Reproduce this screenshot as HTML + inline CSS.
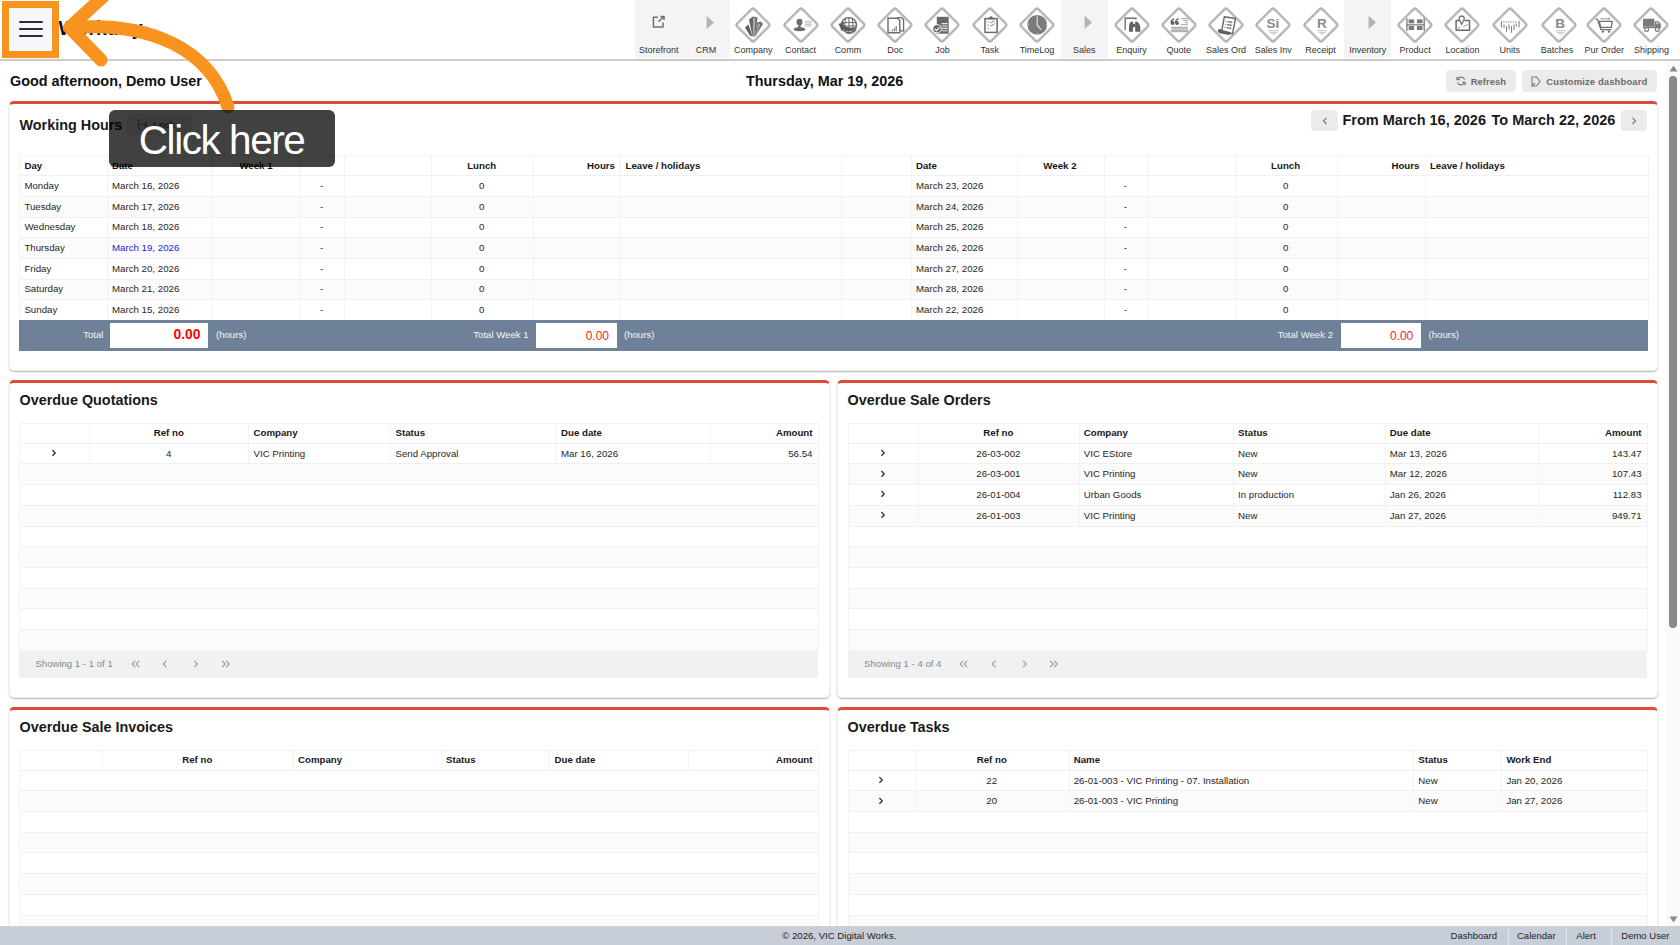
<!DOCTYPE html><html><head><meta charset="utf-8"><style>*{box-sizing:border-box;margin:0;padding:0}
html,body{width:1680px;height:945px;overflow:hidden;background:#fff;font-family:"Liberation Sans",sans-serif;color:#222}
.abs{position:absolute}
#topbar{position:absolute;left:0;top:0;width:1680px;height:61px;background:#fff;border-bottom:2px solid #cbcbcb}
.ti{position:absolute;top:0;width:47.24px;height:58px}
.ti.g{background:#f4f4f4}
.ti .lb{position:absolute;left:-8px;right:-8px;top:44px;font-size:9px;line-height:12px;color:#333;white-space:nowrap;text-align:center}
.ti svg{position:absolute;left:3.62px;top:5px}
#scroll{position:absolute;left:1666px;top:62px;width:14px;height:864px;background:#fafafa}
.greet{font-weight:bold;font-size:14.4px;line-height:18px;color:#111;white-space:nowrap}
.card{position:absolute;background:#fff;border:1px solid #f0f0f0;border-top:3px solid #dd4a35;border-radius:5px;box-shadow:0 1px 1.5px rgba(0,0,0,.3)}
.ctitle{position:absolute;font-weight:bold;font-size:14.4px;line-height:18px;color:#1a1a1a;white-space:nowrap}
.btn{position:absolute;background:#ebebeb;border-radius:4px;color:#6c6c6c;font-weight:bold;font-size:9.45px;line-height:22px;white-space:nowrap}
.btn.nav{text-align:center;font-weight:normal;font-size:13px;line-height:20px;color:#777}
.rng{font-weight:bold;font-size:14.5px;line-height:18px;color:#1a1a1a;white-space:nowrap}
table{border-collapse:collapse;table-layout:fixed;font-size:9.7px;color:#262626;position:absolute}
td,th{height:20.7px;padding:0 5.5px 0 4px;white-space:nowrap;overflow:hidden;border-left:1px solid #f3f3f3;border-right:1px solid #f3f3f3;border-bottom:1px solid #f0f0f0;text-align:left;line-height:12px}
th{font-weight:bold;color:#181818;height:19.8px;border-top:1px solid #f3f3f3}
tr.o td{background:#fbfbfb}
.c{text-align:center}.r{text-align:right}
.chev{font-weight:bold;font-size:11px;color:#333}
.totbar{background:#6f8199;color:#fff;font-size:9.6px}
.totbar .tl{top:0;line-height:30.7px;color:#f4f6fa}
.totbar .hrs{top:0;line-height:30.7px;color:#f4f6fa}
.totbar .inp{top:3.1px;height:24.8px;padding-top:0.7px;background:#fff;text-align:right;padding-right:7.7px;color:#f00}
.totbar .big{font-weight:bold;font-size:13.9px;line-height:24px;position:relative;top:-1.6px}
.totbar .sm{font-size:12px;line-height:24px;color:#f22}
.pag{position:absolute;background:#f0f1f3;height:28.5px;font-size:9.6px;color:#888;line-height:28.5px}
.pag .pg{color:#777;font-size:11px}
#footer{position:absolute;left:0;top:926px;width:1680px;height:19px;background:#c8ced8;font-size:9.5px;color:#222;line-height:19px}
.fsep{top:0;height:19px;width:1.2px;background:#dfe3ea}
</style></head><body>
<div id="topbar">
<div class="abs" style="left:58.5px;top:17.3px;font-weight:bold;font-size:19.5px;line-height:22px;color:#111">Worktray</div>
<div class="ti g" style="left:635.20px"><svg style="left:3.63px" width="40" height="40" viewBox="0 0 40 40"><path d="M18.8 12.3H14.4V22H24V17.6" fill="none" stroke="#6d6d6d" stroke-width="1.5" stroke-linejoin="round"/><path d="M19.5 16.8L24.6 11.8M21.4 11.4H25V15" fill="none" stroke="#6d6d6d" stroke-width="1.5"/></svg><div class="lb">Storefront</div></div>
<div class="ti g" style="left:682.47px"><svg style="left:3.63px" width="40" height="40" viewBox="0 0 40 40"><polygon points="20.6,10.8 28,17.4 20.6,24" fill="#b3b3b3"/></svg><div class="lb">CRM</div></div>
<div class="ti" style="left:729.74px"><svg style="left:3.63px" width="40" height="40" viewBox="0 0 40 40"><path d="M18.4 4.4Q20 2.8 21.6 4.4L35.6 18.4Q37.2 20 35.6 21.6L21.6 35.6Q20 37.2 18.4 35.6L4.4 21.6Q2.8 20 4.4 18.4Z" fill="#fff" stroke="#b6b6b6" stroke-width="2.5"/><path d="M18.9 5.7Q20 4.6 21.1 5.7L34.3 18.9Q35.4 20 34.3 21.1L21.1 34.3Q20 35.4 18.9 34.3L5.7 21.1Q4.6 20 5.7 18.9Z" fill="none" stroke="#e2e2e2" stroke-width="0.7"/><path d="M12 22.5L15.5 19.5L19.5 31.5L17 30.5Z" fill="#5f5f5f"/><path d="M16 14.5L20 11.5L24.5 12.5L22 31.5L19.5 31.5Z" fill="#666"/><path d="M20 12.5L22.5 13L21.5 31L19.8 31.2Z" fill="#aaa"/><path d="M24 17.5L28 16.5L30 19L22.5 31L22 30.5Z" fill="#707070"/><path d="M25.5 18.5L27.3 19.3L22.6 30.3Z" fill="#b5b5b5"/></svg><div class="lb">Company</div></div>
<div class="ti" style="left:777.01px"><svg style="left:3.93px" width="40" height="40" viewBox="0 0 40 40"><path d="M18.4 4.4Q20 2.8 21.6 4.4L35.6 18.4Q37.2 20 35.6 21.6L21.6 35.6Q20 37.2 18.4 35.6L4.4 21.6Q2.8 20 4.4 18.4Z" fill="#fff" stroke="#b6b6b6" stroke-width="2.5"/><path d="M18.9 5.7Q20 4.6 21.1 5.7L34.3 18.9Q35.4 20 34.3 21.1L21.1 34.3Q20 35.4 18.9 34.3L5.7 21.1Q4.6 20 5.7 18.9Z" fill="none" stroke="#e2e2e2" stroke-width="0.7"/><ellipse cx="18.5" cy="17.1" rx="3" ry="3.4" fill="#6a6a6a"/><path d="M17.3 20.2H19.7V22.3Q24.3 22.6 24.3 24.6Q24.3 26.3 18.5 26.3Q12.7 26.3 12.7 24.6Q12.7 22.6 17.3 22.3Z" fill="#6a6a6a"/><path d="M24 16.3H30.7M24 18H30.7M24 19.6H30.7M24 21H30.7" stroke="#b8b8b8" stroke-width="0.9"/></svg><div class="lb">Contact</div></div>
<div class="ti" style="left:824.28px"><svg style="left:3.63px" width="40" height="40" viewBox="0 0 40 40"><path d="M18.4 4.4Q20 2.8 21.6 4.4L35.6 18.4Q37.2 20 35.6 21.6L21.6 35.6Q20 37.2 18.4 35.6L4.4 21.6Q2.8 20 4.4 18.4Z" fill="#fff" stroke="#b6b6b6" stroke-width="2.5"/><path d="M18.9 5.7Q20 4.6 21.1 5.7L34.3 18.9Q35.4 20 34.3 21.1L21.1 34.3Q20 35.4 18.9 34.3L5.7 21.1Q4.6 20 5.7 18.9Z" fill="none" stroke="#e2e2e2" stroke-width="0.7"/><circle cx="20.9" cy="20.2" r="7.6" fill="#fff" stroke="#686868" stroke-width="1.4"/><path d="M13.5 17.6H28.3M13.5 21H28.3M17.6 13.2Q15.9 20 17.6 27M20.9 12.6V27.8M24.2 13.2Q25.9 20 24.2 27" fill="none" stroke="#6e6e6e" stroke-width="1"/><path d="M10.6 18.8L16.8 17.6L15.4 19.8Q20.5 24.3 28.6 21.8Q26.2 26.8 18.6 26.2L15.2 24.3L13.8 26.6Z" fill="#5c5c5c"/><path d="M18.5 28.2Q24.5 29.4 28.2 24.6" fill="none" stroke="#707070" stroke-width="1.1"/></svg><div class="lb">Comm</div></div>
<div class="ti" style="left:871.55px"><svg style="left:3.63px" width="40" height="40" viewBox="0 0 40 40"><path d="M18.4 4.4Q20 2.8 21.6 4.4L35.6 18.4Q37.2 20 35.6 21.6L21.6 35.6Q20 37.2 18.4 35.6L4.4 21.6Q2.8 20 4.4 18.4Z" fill="#fff" stroke="#b6b6b6" stroke-width="2.5"/><path d="M18.9 5.7Q20 4.6 21.1 5.7L34.3 18.9Q35.4 20 34.3 21.1L21.1 34.3Q20 35.4 18.9 34.3L5.7 21.1Q4.6 20 5.7 18.9Z" fill="none" stroke="#e2e2e2" stroke-width="0.7"/><path d="M22.3 12.6H26.5L28.6 14.7V25.8H22.3" fill="#fff" stroke="#6a6a6a" stroke-width="1.3"/><path d="M13 13.2H22.5L24.8 15.5V27.8H13Z" fill="#fff" stroke="#6a6a6a" stroke-width="1.4"/><path d="M15.8 26.3V25.6M17.6 26.3V24.6M19.4 26.3V23.2M21.2 26.3V21" stroke="#6a6a6a" stroke-width="1"/></svg><div class="lb">Doc</div></div>
<div class="ti" style="left:918.82px"><svg style="left:3.63px" width="40" height="40" viewBox="0 0 40 40"><path d="M18.4 4.4Q20 2.8 21.6 4.4L35.6 18.4Q37.2 20 35.6 21.6L21.6 35.6Q20 37.2 18.4 35.6L4.4 21.6Q2.8 20 4.4 18.4Z" fill="#fff" stroke="#b6b6b6" stroke-width="2.5"/><path d="M18.9 5.7Q20 4.6 21.1 5.7L34.3 18.9Q35.4 20 34.3 21.1L21.1 34.3Q20 35.4 18.9 34.3L5.7 21.1Q4.6 20 5.7 18.9Z" fill="none" stroke="#e2e2e2" stroke-width="0.7"/><rect x="14.8" y="11.8" width="11.9" height="16.9" fill="#676767"/><path d="M19.5 18.6H25.6M19.5 21H25.6M19.5 23.4H25.6M19.5 25.8H25.6" stroke="#e6e6e6" stroke-width="1.1"/><circle cx="15" cy="23.8" r="4.1" fill="#676767" stroke="#fff" stroke-width="0.9"/><path d="M12.9 23.9L14.6 25.6L17.3 22.4" fill="none" stroke="#fff" stroke-width="1.2"/></svg><div class="lb">Job</div></div>
<div class="ti" style="left:966.09px"><svg style="left:3.63px" width="40" height="40" viewBox="0 0 40 40"><path d="M18.4 4.4Q20 2.8 21.6 4.4L35.6 18.4Q37.2 20 35.6 21.6L21.6 35.6Q20 37.2 18.4 35.6L4.4 21.6Q2.8 20 4.4 18.4Z" fill="#fff" stroke="#b6b6b6" stroke-width="2.5"/><path d="M18.9 5.7Q20 4.6 21.1 5.7L34.3 18.9Q35.4 20 34.3 21.1L21.1 34.3Q20 35.4 18.9 34.3L5.7 21.1Q4.6 20 5.7 18.9Z" fill="none" stroke="#e2e2e2" stroke-width="0.7"/><rect x="15" y="13.6" width="12.1" height="13.8" fill="none" stroke="#6a6a6a" stroke-width="1.5"/><path d="M18.4 14.2V12.5H19.8A1.3 1.3 0 0 1 22.4 12.5H23.8V14.2Z" fill="#6a6a6a"/><path d="M17.5 17H18.6M17.5 20.2H18.6M17.5 23.4H18.6" stroke="#777" stroke-width="1.2"/><path d="M20.2 16.8L21.3 17.8L24.6 15.3M20.2 20L21.3 21L24.6 18.5" fill="none" stroke="#777" stroke-width="1"/></svg><div class="lb">Task</div></div>
<div class="ti" style="left:1013.36px"><svg style="left:3.63px" width="40" height="40" viewBox="0 0 40 40"><path d="M18.4 4.4Q20 2.8 21.6 4.4L35.6 18.4Q37.2 20 35.6 21.6L21.6 35.6Q20 37.2 18.4 35.6L4.4 21.6Q2.8 20 4.4 18.4Z" fill="#fff" stroke="#b6b6b6" stroke-width="2.5"/><path d="M18.9 5.7Q20 4.6 21.1 5.7L34.3 18.9Q35.4 20 34.3 21.1L21.1 34.3Q20 35.4 18.9 34.3L5.7 21.1Q4.6 20 5.7 18.9Z" fill="none" stroke="#e2e2e2" stroke-width="0.7"/><circle cx="20.2" cy="19.8" r="9.9" fill="#7b7b7b"/><path d="M20.2 11.4V20.2L24.3 24.9" fill="none" stroke="#e8e8e8" stroke-width="1.1"/><path d="M20.2 10.7V11.7M20.2 27.9V28.9M11 19.8H12M28.4 19.8H29.4" stroke="#ddd" stroke-width="0.9"/></svg><div class="lb">TimeLog</div></div>
<div class="ti g" style="left:1060.63px"><svg style="left:3.63px" width="40" height="40" viewBox="0 0 40 40"><polygon points="20.6,10.8 28,17.4 20.6,24" fill="#b3b3b3"/></svg><div class="lb">Sales</div></div>
<div class="ti" style="left:1107.90px"><svg style="left:3.63px" width="40" height="40" viewBox="0 0 40 40"><path d="M18.4 4.4Q20 2.8 21.6 4.4L35.6 18.4Q37.2 20 35.6 21.6L21.6 35.6Q20 37.2 18.4 35.6L4.4 21.6Q2.8 20 4.4 18.4Z" fill="#fff" stroke="#b6b6b6" stroke-width="2.5"/><path d="M18.9 5.7Q20 4.6 21.1 5.7L34.3 18.9Q35.4 20 34.3 21.1L21.1 34.3Q20 35.4 18.9 34.3L5.7 21.1Q4.6 20 5.7 18.9Z" fill="none" stroke="#e2e2e2" stroke-width="0.7"/><path d="M13.2 25V13.2H24V14.6" fill="none" stroke="#707070" stroke-width="1.4"/><path d="M17.6 18L19.6 16.4H21V26.7H17V21.5Z" fill="#636363"/><path d="M23.2 16.4H24.6L26.8 18L28.3 21.5V26.7H23.2Z" fill="#636363"/><rect x="20.8" y="18.8" width="2.6" height="3.4" fill="#636363"/></svg><div class="lb">Enquiry</div></div>
<div class="ti" style="left:1155.17px"><svg style="left:3.63px" width="40" height="40" viewBox="0 0 40 40"><path d="M18.4 4.4Q20 2.8 21.6 4.4L35.6 18.4Q37.2 20 35.6 21.6L21.6 35.6Q20 37.2 18.4 35.6L4.4 21.6Q2.8 20 4.4 18.4Z" fill="#fff" stroke="#b6b6b6" stroke-width="2.5"/><path d="M18.9 5.7Q20 4.6 21.1 5.7L34.3 18.9Q35.4 20 34.3 21.1L21.1 34.3Q20 35.4 18.9 34.3L5.7 21.1Q4.6 20 5.7 18.9Z" fill="none" stroke="#e2e2e2" stroke-width="0.7"/><circle cx="13.6" cy="18" r="1.9" fill="#5f5f5f"/><circle cx="18" cy="18" r="1.9" fill="#5f5f5f"/><path d="M12 17.8Q12.3 14.4 15.2 13.9M16.4 17.8Q16.7 14.4 19.6 13.9" fill="none" stroke="#5f5f5f" stroke-width="1.4"/><path d="M21.7 13.7H29M24.2 15.8H29M26 17.8H29M21.7 19.8H29M12.2 22.4H29M12.2 23.9H29M12.2 25.3H29M12.2 26.7H29" stroke="#8c8c8c" stroke-width="0.85"/></svg><div class="lb">Quote</div></div>
<div class="ti" style="left:1202.44px"><svg style="left:3.63px" width="40" height="40" viewBox="0 0 40 40"><path d="M18.4 4.4Q20 2.8 21.6 4.4L35.6 18.4Q37.2 20 35.6 21.6L21.6 35.6Q20 37.2 18.4 35.6L4.4 21.6Q2.8 20 4.4 18.4Z" fill="#fff" stroke="#b6b6b6" stroke-width="2.5"/><path d="M18.9 5.7Q20 4.6 21.1 5.7L34.3 18.9Q35.4 20 34.3 21.1L21.1 34.3Q20 35.4 18.9 34.3L5.7 21.1Q4.6 20 5.7 18.9Z" fill="none" stroke="#e2e2e2" stroke-width="0.7"/><path d="M18.3 11.8L29.5 13.5L26.5 28.8L15.5 27Z" fill="#fff" stroke="#666" stroke-width="1.4" stroke-linejoin="round"/><path d="M19.5 16.3L20.3 16.4M21.5 16.6L26.3 17.4M19 19.3L19.8 19.4M21 19.6L25.8 20.4M18.5 22.3L19.3 22.4M20.5 22.6L25.3 23.4" stroke="#6a6a6a" stroke-width="1.1"/><path d="M11.8 25.2Q13.5 22.8 16 25L25 27.3Q24.5 30.8 21.5 29.8L14 28.2Q11.5 27.5 11.8 25.2Z" fill="#5f5f5f"/></svg><div class="lb">Sales Ord</div></div>
<div class="ti" style="left:1249.71px"><svg style="left:3.63px" width="40" height="40" viewBox="0 0 40 40"><path d="M18.4 4.4Q20 2.8 21.6 4.4L35.6 18.4Q37.2 20 35.6 21.6L21.6 35.6Q20 37.2 18.4 35.6L4.4 21.6Q2.8 20 4.4 18.4Z" fill="#fff" stroke="#b6b6b6" stroke-width="2.5"/><path d="M18.9 5.7Q20 4.6 21.1 5.7L34.3 18.9Q35.4 20 34.3 21.1L21.1 34.3Q20 35.4 18.9 34.3L5.7 21.1Q4.6 20 5.7 18.9Z" fill="none" stroke="#e2e2e2" stroke-width="0.7"/><text x="19.8" y="23.3" text-anchor="middle" font-family="Liberation Sans" font-weight="bold" font-size="13.6" fill="#8a8a8a">Si</text><path d="M15.2 25.7H25.8M16.6 27.4H24.4M18.3 29H22.7" stroke="#c4c4c4" stroke-width="1"/></svg><div class="lb">Sales Inv</div></div>
<div class="ti" style="left:1296.98px"><svg style="left:3.93px" width="40" height="40" viewBox="0 0 40 40"><path d="M18.4 4.4Q20 2.8 21.6 4.4L35.6 18.4Q37.2 20 35.6 21.6L21.6 35.6Q20 37.2 18.4 35.6L4.4 21.6Q2.8 20 4.4 18.4Z" fill="#fff" stroke="#b6b6b6" stroke-width="2.5"/><path d="M18.9 5.7Q20 4.6 21.1 5.7L34.3 18.9Q35.4 20 34.3 21.1L21.1 34.3Q20 35.4 18.9 34.3L5.7 21.1Q4.6 20 5.7 18.9Z" fill="none" stroke="#e2e2e2" stroke-width="0.7"/><text x="21" y="23.3" text-anchor="middle" font-family="Liberation Sans" font-weight="bold" font-size="13.6" fill="#8a8a8a">R</text><path d="M16.2 25.7H25.8M17.6 27.4H24.4M19.3 29H22.7" stroke="#c4c4c4" stroke-width="1"/></svg><div class="lb">Receipt</div></div>
<div class="ti g" style="left:1344.25px"><svg style="left:3.63px" width="40" height="40" viewBox="0 0 40 40"><polygon points="20.6,10.8 28,17.4 20.6,24" fill="#b3b3b3"/></svg><div class="lb">Inventory</div></div>
<div class="ti" style="left:1391.52px"><svg style="left:3.63px" width="40" height="40" viewBox="0 0 40 40"><path d="M18.4 4.4Q20 2.8 21.6 4.4L35.6 18.4Q37.2 20 35.6 21.6L21.6 35.6Q20 37.2 18.4 35.6L4.4 21.6Q2.8 20 4.4 18.4Z" fill="#fff" stroke="#b6b6b6" stroke-width="2.5"/><path d="M18.9 5.7Q20 4.6 21.1 5.7L34.3 18.9Q35.4 20 34.3 21.1L21.1 34.3Q20 35.4 18.9 34.3L5.7 21.1Q4.6 20 5.7 18.9Z" fill="none" stroke="#e2e2e2" stroke-width="0.7"/><path d="M11.9 13.3V26.1M29.2 13.3V26.1M12 19.8H29.1" stroke="#777" stroke-width="1.3"/><rect x="13.6" y="14.4" width="5.5" height="3.9" fill="#787878"/><rect x="21.9" y="14.4" width="5.6" height="3.9" fill="#787878"/><rect x="13.6" y="21.1" width="5.5" height="3.9" fill="#787878"/><rect x="21.9" y="21.1" width="5.6" height="3.9" fill="#787878"/></svg><div class="lb">Product</div></div>
<div class="ti" style="left:1438.79px"><svg style="left:3.63px" width="40" height="40" viewBox="0 0 40 40"><path d="M18.4 4.4Q20 2.8 21.6 4.4L35.6 18.4Q37.2 20 35.6 21.6L21.6 35.6Q20 37.2 18.4 35.6L4.4 21.6Q2.8 20 4.4 18.4Z" fill="#fff" stroke="#b6b6b6" stroke-width="2.5"/><path d="M18.9 5.7Q20 4.6 21.1 5.7L34.3 18.9Q35.4 20 34.3 21.1L21.1 34.3Q20 35.4 18.9 34.3L5.7 21.1Q4.6 20 5.7 18.9Z" fill="none" stroke="#e2e2e2" stroke-width="0.7"/><path d="M17 15.4H14.1V25.2H27.5V15.4H22.5" fill="none" stroke="#6a6a6a" stroke-width="1.5" stroke-linejoin="round"/><path d="M19.7 19.2L17.4 14.8A2.6 2.6 0 1 1 22 14.8Z" fill="none" stroke="#6a6a6a" stroke-width="1.3"/><path d="M15.5 24L18.5 21.6M21.3 21.6L25.8 19.5" stroke="#888" stroke-width="0.9"/></svg><div class="lb">Location</div></div>
<div class="ti" style="left:1486.06px"><svg style="left:3.63px" width="40" height="40" viewBox="0 0 40 40"><path d="M18.4 4.4Q20 2.8 21.6 4.4L35.6 18.4Q37.2 20 35.6 21.6L21.6 35.6Q20 37.2 18.4 35.6L4.4 21.6Q2.8 20 4.4 18.4Z" fill="#fff" stroke="#b6b6b6" stroke-width="2.5"/><path d="M18.9 5.7Q20 4.6 21.1 5.7L34.3 18.9Q35.4 20 34.3 21.1L21.1 34.3Q20 35.4 18.9 34.3L5.7 21.1Q4.6 20 5.7 18.9Z" fill="none" stroke="#e2e2e2" stroke-width="0.7"/><path d="M11.4 16V22.5M29.1 16V22.5M13.8 16.3V17.6M16.2 16.3V17.6M18.6 16.3V17.6M21 16.3V17.6M23.4 16.3V17.6M25.8 16.3V17.6M14 19.5V23M16.5 21V27M19 19.5V24.5M21.5 21V27.7M24 19.5V25M26.3 18.5V21.5" stroke="#848484" stroke-width="1.1"/></svg><div class="lb">Units</div></div>
<div class="ti" style="left:1533.33px"><svg style="left:6.13px" width="40" height="40" viewBox="0 0 40 40"><path d="M18.4 4.4Q20 2.8 21.6 4.4L35.6 18.4Q37.2 20 35.6 21.6L21.6 35.6Q20 37.2 18.4 35.6L4.4 21.6Q2.8 20 4.4 18.4Z" fill="#fff" stroke="#b6b6b6" stroke-width="2.5"/><path d="M18.9 5.7Q20 4.6 21.1 5.7L34.3 18.9Q35.4 20 34.3 21.1L21.1 34.3Q20 35.4 18.9 34.3L5.7 21.1Q4.6 20 5.7 18.9Z" fill="none" stroke="#e2e2e2" stroke-width="0.7"/><text x="21.2" y="23.3" text-anchor="middle" font-family="Liberation Sans" font-weight="bold" font-size="13.6" fill="#8a8a8a">B</text><path d="M16.4 25.7H27M17.8 27.4H25.6M19.5 29H23.9" stroke="#c4c4c4" stroke-width="1"/></svg><div class="lb">Batches</div></div>
<div class="ti" style="left:1580.60px"><svg style="left:3.63px" width="40" height="40" viewBox="0 0 40 40"><path d="M18.4 4.4Q20 2.8 21.6 4.4L35.6 18.4Q37.2 20 35.6 21.6L21.6 35.6Q20 37.2 18.4 35.6L4.4 21.6Q2.8 20 4.4 18.4Z" fill="#fff" stroke="#b6b6b6" stroke-width="2.5"/><path d="M18.9 5.7Q20 4.6 21.1 5.7L34.3 18.9Q35.4 20 34.3 21.1L21.1 34.3Q20 35.4 18.9 34.3L5.7 21.1Q4.6 20 5.7 18.9Z" fill="none" stroke="#e2e2e2" stroke-width="0.7"/><path d="M11.6 14.2H13.4L16.9 24.6H27.5" fill="none" stroke="#6d6d6d" stroke-width="1.3" stroke-linejoin="round"/><path d="M15.2 16.4H28.2L27.3 22.4H17Z" fill="none" stroke="#6d6d6d" stroke-width="1.3"/><circle cx="18.9" cy="26.6" r="1.2" fill="#6d6d6d"/><circle cx="25" cy="26.6" r="1.2" fill="#6d6d6d"/><path d="M16.3 13.8H26M24.6 12.5L26 13.8L24.6 15.1" fill="none" stroke="#888" stroke-width="0.9"/></svg><div class="lb">Pur Order</div></div>
<div class="ti" style="left:1627.87px"><svg style="left:3.63px" width="40" height="40" viewBox="0 0 40 40"><path d="M18.4 4.4Q20 2.8 21.6 4.4L35.6 18.4Q37.2 20 35.6 21.6L21.6 35.6Q20 37.2 18.4 35.6L4.4 21.6Q2.8 20 4.4 18.4Z" fill="#fff" stroke="#b6b6b6" stroke-width="2.5"/><path d="M18.9 5.7Q20 4.6 21.1 5.7L34.3 18.9Q35.4 20 34.3 21.1L21.1 34.3Q20 35.4 18.9 34.3L5.7 21.1Q4.6 20 5.7 18.9Z" fill="none" stroke="#e2e2e2" stroke-width="0.7"/><rect x="12" y="13.7" width="11.4" height="7.9" fill="#7c7c7c"/><path d="M23.8 16.2H27.6L29.8 19V23.2H23.8Z" fill="#7c7c7c"/><rect x="12" y="21.6" width="17.8" height="1.6" fill="#7c7c7c"/><circle cx="15.6" cy="24.5" r="1.9" fill="#fff" stroke="#7c7c7c" stroke-width="1.2"/><circle cx="26.3" cy="24.5" r="1.9" fill="#fff" stroke="#7c7c7c" stroke-width="1.2"/><rect x="25.2" y="17.2" width="2.4" height="2" fill="#fff" opacity=".6"/></svg><div class="lb">Shipping</div></div>
</div>
<div id="scroll"><div class="abs" style="left:3.4px;top:14px;width:8px;height:552px;background:#898989;border-radius:4px"></div>
<svg class="abs" style="left:2.9px;top:2.6px" width="9" height="7"><polygon points="4.5,0.5 8.5,6.5 0.5,6.5" fill="#8a8a8a"/></svg>
<svg class="abs" style="left:2.9px;top:853.5px" width="9" height="7"><polygon points="0.5,0.5 8.5,0.5 4.5,6.5" fill="#8a8a8a"/></svg>
</div>
<div class="abs greet" style="left:10px;top:72px">Good afternoon, Demo User</div>
<div class="abs greet" style="left:746px;top:72px">Thursday, Mar 19, 2026</div>
<div class="btn" style="left:1445.5px;top:70px;width:70.5px;height:22px;padding-left:10px"><svg class="abs" style="left:10px;top:6px" width="10" height="10" viewBox="0 0 10 10"><path d="M8.6 3.6A3.9 3.9 0 0 0 1.6 3M1.4 6.4A3.9 3.9 0 0 0 8.4 7" fill="none" stroke="#7a7a7a" stroke-width="1.2"/><path d="M1 0.8V3.6H3.8M9 9.2V6.4H6.2" fill="none" stroke="#7a7a7a" stroke-width="1.2"/></svg><span class="abs" style="left:25.3px;top:0.6px">Refresh</span></div>
<div class="btn" style="left:1521.8px;top:70px;width:135px;height:22px"><svg class="abs" style="left:9.5px;top:5.5px" width="10" height="11" viewBox="0 0 10 11"><path d="M1 1H5.5L9 5.5L5.5 10H1Z" fill="none" stroke="#7a7a7a" stroke-width="1.1"/><path d="M1 10L4 7" stroke="#7a7a7a" stroke-width="1.1"/></svg><span class="abs" style="left:24.5px;top:0.6px;letter-spacing:0.13px">Customize dashboard</span></div>
<div class="card" style="left:9px;top:101px;width:1649px;height:269.5px"></div>
<div class="ctitle" style="left:19.5px;top:116.3px">Working Hours</div>
<div class="btn" style="left:127px;top:114px;width:64.5px;height:21px;line-height:21px"><svg class="abs" style="left:10px;top:5px" width="12" height="11" viewBox="0 0 12 11"><path d="M4 1H1.5V10H4" fill="none" stroke="#7a7a7a" stroke-width="1.1"/><path d="M3.5 5.5H10M7.5 3L10 5.5L7.5 8" fill="none" stroke="#7a7a7a" stroke-width="1.1"/></svg><span class="abs" style="left:26px;top:0">Lock</span></div>
<div class="btn nav" style="left:1311px;top:110px;width:27px;height:21px"><svg class="abs" style="left:10.5px;top:6.6px" width="6" height="8" viewBox="0 0 6 8"><path d="M4.5 0.8L1.5 3.9L4.5 7" fill="none" stroke="#7a7a7a" stroke-width="1.2"/></svg></div>
<div class="abs rng" style="left:1342.5px;top:111px">From March 16, 2026</div><div class="abs rng" style="left:1491.5px;top:111px">To March 22, 2026</div>
<div class="btn nav" style="left:1621px;top:110px;width:26px;height:21px"><svg class="abs" style="left:10.3px;top:6.6px" width="6" height="8" viewBox="0 0 6 8"><path d="M1.5 0.8L4.5 3.9L1.5 7" fill="none" stroke="#7a7a7a" stroke-width="1.2"/></svg></div>
<table class="tbl wh" style="left:19.4px;top:155.4px;width:1628.20px"><colgroup><col style="width:87.60px"><col style="width:105.50px"><col style="width:87.50px"><col style="width:43.75px"><col style="width:87.25px"><col style="width:102.00px"><col style="width:87.50px"><col style="width:220.50px"><col style="width:70.00px"><col style="width:105.70px"><col style="width:87.10px"><col style="width:43.80px"><col style="width:87.20px"><col style="width:102.20px"><col style="width:88.00px"><col style="width:222.60px"></colgroup><tr class="hd"><th>Day</th><th>Date</th><th class="c">Week 1</th><th></th><th></th><th class="c">Lunch</th><th class="r">Hours</th><th>Leave / holidays</th><th></th><th>Date</th><th class="c">Week 2</th><th></th><th></th><th class="c">Lunch</th><th class="r">Hours</th><th>Leave / holidays</th></tr><tr><td>Monday</td><td>March 16, 2026</td><td></td><td class="c">-</td><td></td><td class="c">0</td><td></td><td></td><td></td><td>March 23, 2026</td><td></td><td class="c">-</td><td></td><td class="c">0</td><td></td><td></td></tr><tr class="o"><td>Tuesday</td><td>March 17, 2026</td><td></td><td class="c">-</td><td></td><td class="c">0</td><td></td><td></td><td></td><td>March 24, 2026</td><td></td><td class="c">-</td><td></td><td class="c">0</td><td></td><td></td></tr><tr><td>Wednesday</td><td>March 18, 2026</td><td></td><td class="c">-</td><td></td><td class="c">0</td><td></td><td></td><td></td><td>March 25, 2026</td><td></td><td class="c">-</td><td></td><td class="c">0</td><td></td><td></td></tr><tr class="o"><td>Thursday</td><td style="color:#2222dd">March 19, 2026</td><td></td><td class="c">-</td><td></td><td class="c">0</td><td></td><td></td><td></td><td>March 26, 2026</td><td></td><td class="c">-</td><td></td><td class="c">0</td><td></td><td></td></tr><tr><td>Friday</td><td>March 20, 2026</td><td></td><td class="c">-</td><td></td><td class="c">0</td><td></td><td></td><td></td><td>March 27, 2026</td><td></td><td class="c">-</td><td></td><td class="c">0</td><td></td><td></td></tr><tr class="o"><td>Saturday</td><td>March 21, 2026</td><td></td><td class="c">-</td><td></td><td class="c">0</td><td></td><td></td><td></td><td>March 28, 2026</td><td></td><td class="c">-</td><td></td><td class="c">0</td><td></td><td></td></tr><tr><td>Sunday</td><td>March 15, 2026</td><td></td><td class="c">-</td><td></td><td class="c">0</td><td></td><td></td><td></td><td>March 22, 2026</td><td></td><td class="c">-</td><td></td><td class="c">0</td><td></td><td></td></tr></table>
<div class="abs totbar" style="left:19.4px;top:320px;width:1628.2px;height:30.7px">
<span class="abs tl" style="right:1544.1px">Total</span>
<div class="abs inp" style="left:90.6px;width:98.2px"><span class="big">0.00</span></div>
<span class="abs hrs" style="left:196.6px">(hours)</span>
<span class="abs tl" style="right:1119px">Total Week 1</span>
<div class="abs inp" style="left:516.9px;width:80.4px"><span class="sm">0.00</span></div>
<span class="abs hrs" style="left:604.6px">(hours)</span>
<span class="abs tl" style="right:314.6px">Total Week 2</span>
<div class="abs inp" style="left:1321.6px;width:80px"><span class="sm">0.00</span></div>
<span class="abs hrs" style="left:1409.2px">(hours)</span>
</div>
<div class="card" style="left:9px;top:379.6px;width:821px;height:318.2px"></div>
<div class="ctitle" style="left:19.5px;top:391.1px">Overdue Quotations</div>
<table class="tbl ov" style="left:19.10px;top:423.00px;width:798.90px"><colgroup><col style="width:70.40px"><col style="width:159.00px"><col style="width:142.00px"><col style="width:165.50px"><col style="width:154.50px"><col style="width:107.50px"></colgroup><tr class="hd"><th class="c"></th><th class="c">Ref no</th><th class="">Company</th><th class="">Status</th><th class="">Due date</th><th class="r">Amount</th></tr><tr><td class="c"><svg width="6" height="8" viewBox="0 0 6 8" style="vertical-align:-0.3px"><path d="M1.4 1L4.2 3.9L1.4 6.8" fill="none" stroke="#333" stroke-width="1.35"/></svg></td><td class="c">4</td><td class="">VIC Printing</td><td class="">Send Approval</td><td class="">Mar 16, 2026</td><td class="r">56.54</td></tr><tr class="o" class="e"><td colspan="6"></td></tr><tr class="e"><td colspan="6"></td></tr><tr class="o" class="e"><td colspan="6"></td></tr><tr class="e"><td colspan="6"></td></tr><tr class="o" class="e"><td colspan="6"></td></tr><tr class="e"><td colspan="6"></td></tr><tr class="o" class="e"><td colspan="6"></td></tr><tr class="e"><td colspan="6"></td></tr><tr class="o" class="e"><td colspan="6"></td></tr></table>
<div class="pag" style="left:19.10px;top:649.80px;width:798.90px"><span class="abs" style="left:16.3px">Showing 1 - 1 of 1</span><svg class="abs" style="left:111.5px;top:10.5px" width="9" height="8" viewBox="0 0 9 8"><path d="M4.2 0.9L1.1 4L4.2 7.1M8.2 0.9L5.1 4L8.2 7.1" fill="none" stroke="#9a9a9a" stroke-width="1.15"/></svg><svg class="abs" style="left:143px;top:10.5px" width="6" height="8" viewBox="0 0 6 8"><path d="M4.4 0.9L1.2 4L4.4 7.1" fill="none" stroke="#9a9a9a" stroke-width="1.15"/></svg><svg class="abs" style="left:173.8px;top:10.5px" width="6" height="8" viewBox="0 0 6 8"><path d="M1.2 0.9L4.4 4L1.2 7.1" fill="none" stroke="#9a9a9a" stroke-width="1.15"/></svg><svg class="abs" style="left:201.5px;top:10.5px" width="9" height="8" viewBox="0 0 9 8"><path d="M1.1 0.9L4.2 4L1.1 7.1M5.1 0.9L8.2 4L5.1 7.1" fill="none" stroke="#9a9a9a" stroke-width="1.15"/></svg></div>
<div class="card" style="left:837px;top:379.6px;width:821px;height:318.2px"></div>
<div class="ctitle" style="left:847.5px;top:391.1px">Overdue Sale Orders</div>
<table class="tbl ov" style="left:847.80px;top:423.00px;width:799.30px"><colgroup><col style="width:70.60px"><col style="width:160.40px"><col style="width:154.30px"><col style="width:151.70px"><col style="width:153.50px"><col style="width:108.80px"></colgroup><tr class="hd"><th class="c"></th><th class="c">Ref no</th><th class="">Company</th><th class="">Status</th><th class="">Due date</th><th class="r">Amount</th></tr><tr><td class="c"><svg width="6" height="8" viewBox="0 0 6 8" style="vertical-align:-0.3px"><path d="M1.4 1L4.2 3.9L1.4 6.8" fill="none" stroke="#333" stroke-width="1.35"/></svg></td><td class="c">26-03-002</td><td class="">VIC EStore</td><td class="">New</td><td class="">Mar 13, 2026</td><td class="r">143.47</td></tr><tr class="o"><td class="c"><svg width="6" height="8" viewBox="0 0 6 8" style="vertical-align:-0.3px"><path d="M1.4 1L4.2 3.9L1.4 6.8" fill="none" stroke="#333" stroke-width="1.35"/></svg></td><td class="c">26-03-001</td><td class="">VIC Printing</td><td class="">New</td><td class="">Mar 12, 2026</td><td class="r">107.43</td></tr><tr><td class="c"><svg width="6" height="8" viewBox="0 0 6 8" style="vertical-align:-0.3px"><path d="M1.4 1L4.2 3.9L1.4 6.8" fill="none" stroke="#333" stroke-width="1.35"/></svg></td><td class="c">26-01-004</td><td class="">Urban Goods</td><td class="">In production</td><td class="">Jan 26, 2026</td><td class="r">112.83</td></tr><tr class="o"><td class="c"><svg width="6" height="8" viewBox="0 0 6 8" style="vertical-align:-0.3px"><path d="M1.4 1L4.2 3.9L1.4 6.8" fill="none" stroke="#333" stroke-width="1.35"/></svg></td><td class="c">26-01-003</td><td class="">VIC Printing</td><td class="">New</td><td class="">Jan 27, 2026</td><td class="r">949.71</td></tr><tr class="e"><td colspan="6"></td></tr><tr class="o" class="e"><td colspan="6"></td></tr><tr class="e"><td colspan="6"></td></tr><tr class="o" class="e"><td colspan="6"></td></tr><tr class="e"><td colspan="6"></td></tr><tr class="o" class="e"><td colspan="6"></td></tr></table>
<div class="pag" style="left:847.80px;top:649.80px;width:799.30px"><span class="abs" style="left:16.3px">Showing 1 - 4 of 4</span><svg class="abs" style="left:111.5px;top:10.5px" width="9" height="8" viewBox="0 0 9 8"><path d="M4.2 0.9L1.1 4L4.2 7.1M8.2 0.9L5.1 4L8.2 7.1" fill="none" stroke="#9a9a9a" stroke-width="1.15"/></svg><svg class="abs" style="left:143px;top:10.5px" width="6" height="8" viewBox="0 0 6 8"><path d="M4.4 0.9L1.2 4L4.4 7.1" fill="none" stroke="#9a9a9a" stroke-width="1.15"/></svg><svg class="abs" style="left:173.8px;top:10.5px" width="6" height="8" viewBox="0 0 6 8"><path d="M1.2 0.9L4.4 4L1.2 7.1" fill="none" stroke="#9a9a9a" stroke-width="1.15"/></svg><svg class="abs" style="left:201.5px;top:10.5px" width="9" height="8" viewBox="0 0 9 8"><path d="M1.1 0.9L4.2 4L1.1 7.1M5.1 0.9L8.2 4L5.1 7.1" fill="none" stroke="#9a9a9a" stroke-width="1.15"/></svg></div>
<div class="card" style="left:9px;top:707px;width:821px;height:260px"></div>
<div class="ctitle" style="left:19.5px;top:717.8px">Overdue Sale Invoices</div>
<table class="tbl ov" style="left:19.10px;top:749.90px;width:798.90px"><colgroup><col style="width:82.90px"><col style="width:191.00px"><col style="width:148.00px"><col style="width:108.50px"><col style="width:139.00px"><col style="width:129.50px"></colgroup><tr class="hd"><th class="c"></th><th class="c">Ref no</th><th class="">Company</th><th class="">Status</th><th class="">Due date</th><th class="r">Amount</th></tr><tr class="e"><td colspan="6"></td></tr><tr class="o" class="e"><td colspan="6"></td></tr><tr class="e"><td colspan="6"></td></tr><tr class="o" class="e"><td colspan="6"></td></tr><tr class="e"><td colspan="6"></td></tr><tr class="o" class="e"><td colspan="6"></td></tr><tr class="e"><td colspan="6"></td></tr><tr class="o" class="e"><td colspan="6"></td></tr></table>
<div class="card" style="left:837px;top:707px;width:821px;height:260px"></div>
<div class="ctitle" style="left:847.5px;top:717.8px">Overdue Tasks</div>
<table class="tbl ov" style="left:847.80px;top:749.90px;width:799.20px"><colgroup><col style="width:67.50px"><col style="width:153.40px"><col style="width:344.60px"><col style="width:88.10px"><col style="width:145.60px"></colgroup><tr class="hd"><th class="c"></th><th class="c">Ref no</th><th class="">Name</th><th class="">Status</th><th class="">Work End</th></tr><tr><td class="c"><svg width="6" height="8" viewBox="0 0 6 8" style="vertical-align:-0.3px"><path d="M1.4 1L4.2 3.9L1.4 6.8" fill="none" stroke="#333" stroke-width="1.35"/></svg></td><td class="c">22</td><td class="">26-01-003 - VIC Printing - 07. Installation</td><td class="">New</td><td class="">Jan 20, 2026</td></tr><tr class="o"><td class="c"><svg width="6" height="8" viewBox="0 0 6 8" style="vertical-align:-0.3px"><path d="M1.4 1L4.2 3.9L1.4 6.8" fill="none" stroke="#333" stroke-width="1.35"/></svg></td><td class="c">20</td><td class="">26-01-003 - VIC Printing</td><td class="">New</td><td class="">Jan 27, 2026</td></tr><tr class="e"><td colspan="5"></td></tr><tr class="o" class="e"><td colspan="5"></td></tr><tr class="e"><td colspan="5"></td></tr><tr class="o" class="e"><td colspan="5"></td></tr><tr class="e"><td colspan="5"></td></tr><tr class="o" class="e"><td colspan="5"></td></tr></table>
<div id="footer"><span class="abs" style="left:782.3px;font-size:9.6px">&copy; 2026, VIC Digital Works.</span>
<span class="abs" style="left:1450.6px">Dashboard</span><div class="abs fsep" style="left:1508px"></div>
<span class="abs" style="left:1517px">Calendar</span><div class="abs fsep" style="left:1566px"></div>
<span class="abs" style="left:1576.3px">Alert</span><div class="abs fsep" style="left:1611px"></div>
<span class="abs" style="left:1621.3px">Demo User</span>
</div>
<div class="abs" style="left:2px;top:1px;width:57px;height:57px;border:7px solid #f7931e;background:#f6f7fb"></div>
<div class="abs" style="left:19px;top:20.5px;width:24px;height:2.2px;background:#2e2e2e;border-radius:1.1px"></div>
<div class="abs" style="left:19px;top:27.5px;width:24px;height:2.2px;background:#2e2e2e;border-radius:1.1px"></div>
<div class="abs" style="left:19px;top:34.8px;width:24px;height:2.2px;background:#2e2e2e;border-radius:1.1px"></div>
<svg class="abs" style="left:0;top:0" width="360" height="180" viewBox="0 0 360 180">
<path d="M228 107 C 210 49, 150 21.5, 72 27.5" fill="none" stroke="#f7931e" stroke-width="13" stroke-linecap="round"/>
<path d="M106 -6 L69.5 27.5 L101 60" fill="none" stroke="#f7931e" stroke-width="13" stroke-linecap="round" stroke-linejoin="round"/>
</svg>
<div class="abs" style="left:108.6px;top:110.3px;width:226.4px;height:56.6px;background:rgba(0,0,0,.745);border-radius:6px"></div>
<div class="abs" style="left:138.8px;top:118.3px;font-size:40.5px;line-height:44px;letter-spacing:-1.45px;color:#fff;white-space:nowrap">Click here</div>

</body></html>
